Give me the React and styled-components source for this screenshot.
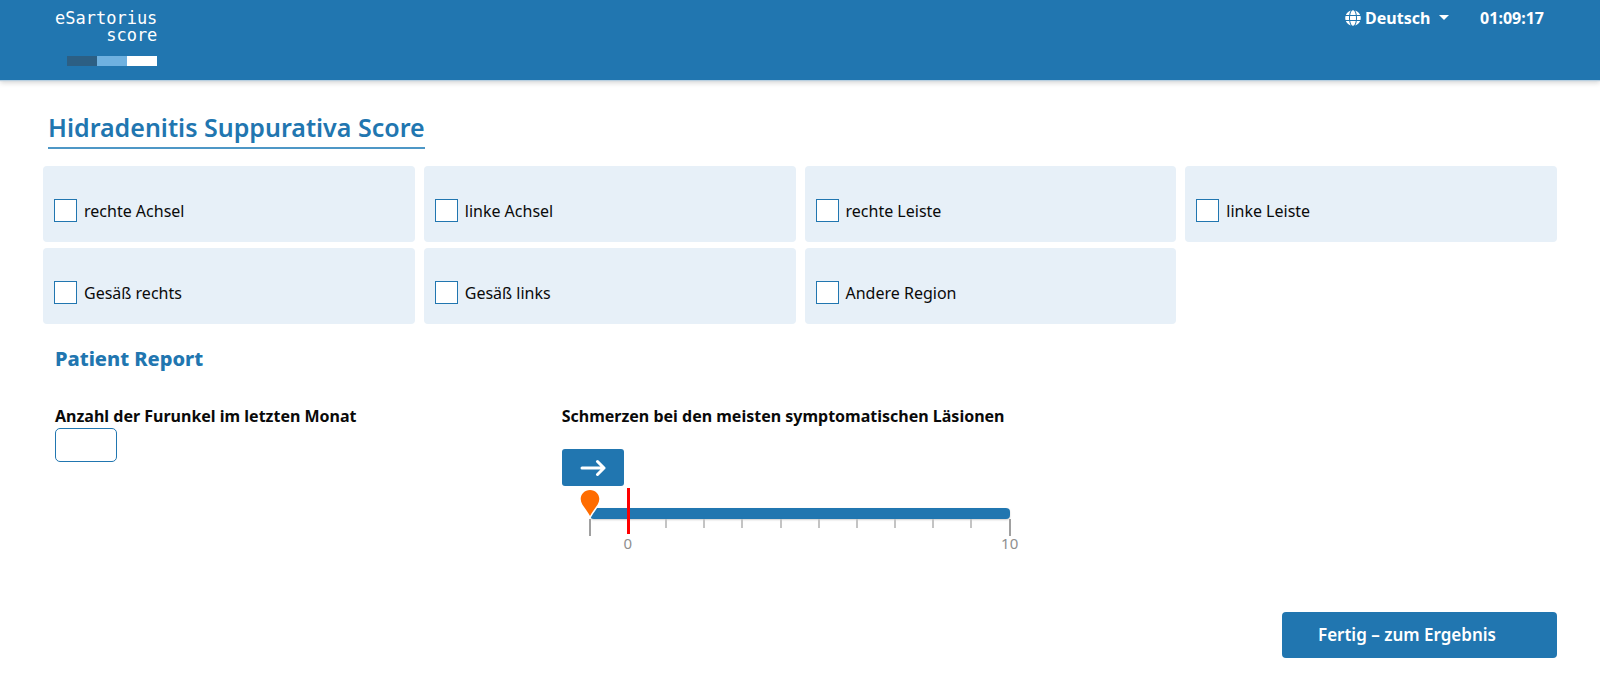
import React, { useState } from "react";
import styled, { createGlobalStyle } from "styled-components";
import { FaGlobe } from "react-icons/fa";

const BLUE = "#2176b0";
const REGIONS = [
  "rechte Achsel",
  "linke Achsel",
  "rechte Leiste",
  "linke Leiste",
  "Gesäß rechts",
  "Gesäß links",
  "Andere Region",
];
const MIN = -1;
const MAX = 10;

const GlobalStyle = createGlobalStyle`
  *, *::before, *::after { box-sizing: border-box; }
  body {
    margin: 0;
    background: #fff;
    color: #0a0a0a;
    font: 400 16px/24px "Noto Sans", sans-serif;
  }
  button, input, select { font: inherit; color: inherit; margin: 0; }
`;

const Header = styled.header`
  display: flex;
  justify-content: space-between;
  align-items: flex-start;
  height: 80px;
  padding: 6px 56px 0 55px;
  background: ${BLUE};
  color: #fff;
  box-shadow: 0 1px 1px #b8cfe0, 0 3px 5px rgba(0, 0, 0, 0.16);
`;

const Logo = styled.a`
  display: flex;
  flex-direction: column;
  align-items: flex-end;
  padding-top: 4px;
  color: #fff;
  text-decoration: none;
  font: 400 17px/17px "DejaVu Sans Mono", monospace;
`;

const LogoBar = styled.span`
  display: flex;
  margin-top: 12px;
`;

const LogoBlock = styled.span`
  width: 30px;
  height: 10px;
  background: ${(p) => p.$color};
`;

const Tools = styled.div`
  display: flex;
  align-items: center;
  gap: 31px;
  font-weight: 700;
`;

const Language = styled.label`
  display: flex;
  align-items: center;
  gap: 4px;
`;

const Caret = styled.span`
  width: 10px;
  margin: 0 0 2px -14px;
  border: 5px solid transparent;
  border-top-color: #fff;
  border-bottom: 0;
  pointer-events: none;
`;

const LanguageSelect = styled.select`
  appearance: none;
  width: 84px;
  height: 24px;
  padding: 0;
  border: 0;
  background: transparent;
  line-height: 24px;
`;

const Main = styled.main`
  padding: 31px 43px 28px;
`;

const Title = styled.h1`
  width: fit-content;
  margin: 0 0 17px 5px;
  padding-bottom: 4px;
  border-bottom: 2px solid #4d97c6;
  color: ${BLUE};
  font-size: 25px;
  font-weight: 600;
  line-height: 32px;
`;

const RegionGrid = styled.div`
  display: grid;
  grid-template-columns: repeat(4, 1fr);
  gap: 6px 9px;
`;

const RegionCard = styled.label`
  display: flex;
  align-items: center;
  gap: 7px;
  height: 76px;
  padding: 12px 11px 0;
  border-radius: 4px;
  background: #e7f0f8;
`;

const RegionName = styled.span`
  padding-top: 2px;
`;

const Checkbox = styled.input`
  appearance: none;
  width: 23px;
  height: 23px;
  border: 1px solid ${BLUE};
  background: #fff;
  &:checked {
    background: ${BLUE};
    box-shadow: inset 0 0 0 4px #fff;
  }
`;

const Report = styled.section`
  padding-left: 12px;
`;

const ReportTitle = styled.h2`
  margin: 21px 0 31px;
  color: ${BLUE};
  font-size: 20px;
  font-weight: 800;
  line-height: 28px;
`;

const ReportGrid = styled.div`
  display: grid;
  grid-template-columns: 1fr 2fr;
  gap: 9px;
`;

const Field = styled.div`
  display: flex;
  flex-direction: column;
  align-items: flex-start;
`;

const FieldLabel = styled.label`
  font-weight: 700;
`;

const NumberInput = styled.input`
  width: 62px;
  height: 34px;
  padding: 0 8px;
  border: 1px solid ${BLUE};
  border-radius: 5px;
  background: #fff;
`;

const StepButton = styled.button`
  display: flex;
  align-items: center;
  justify-content: center;
  width: 62px;
  height: 37px;
  margin-top: 21px;
  padding: 0;
  border: 0;
  border-radius: 3px;
  background: ${BLUE};
  color: #fff;
`;

const Slider = styled.div`
  position: relative;
  width: 100%;
  max-width: 448px;
  padding: 22px 0 0 28px;
`;

const Range = styled.input`
  appearance: none;
  display: block;
  width: 100%;
  height: 11px;
  border-radius: 4px;
  background: ${BLUE};
  box-shadow: 0 1px 2px rgba(0, 0, 0, 0.2);
  &::-webkit-slider-thumb {
    appearance: none;
    width: 1px;
    height: 11px;
  }
`;

const Overlay = styled.div`
  position: absolute;
  inset: 0 0 0 28px;
  pointer-events: none;
`;

const Pin = styled.svg`
  position: absolute;
  top: 2px;
  width: 28px;
  height: 32px;
  transform: translateX(-50%);
`;

const ZeroMark = styled.span`
  position: absolute;
  top: 2px;
  left: calc(100% / 11);
  width: 3px;
  height: 46px;
  margin-left: -1px;
  background: #f00;
`;

const Ticks = styled.div`
  display: flex;
  justify-content: space-between;
  height: 17px;
  margin: 0 -1px;
`;

const Tick = styled.span`
  width: 2px;
  height: ${(p) => (p.$long ? "17px" : "9px")};
  background: ${(p) => (p.$long ? "#a0a0a0" : "#c4c4c4")};
`;

const ScaleNumbers = styled.div`
  display: flex;
  justify-content: space-between;
  margin: 0 -20px 0 calc(100% / 11 - 20px);
  color: #8f8f8f;
  font-size: 15px;
  line-height: 14px;
`;

const ScaleNumber = styled.span`
  width: 40px;
  text-align: center;
`;

const Actions = styled.div`
  display: flex;
  justify-content: flex-end;
  margin-top: 62px;
`;

const SubmitButton = styled.button`
  width: 275px;
  height: 46px;
  padding: 0 36px;
  border: 0;
  border-radius: 4px;
  background: ${BLUE};
  color: #fff;
  font-size: 17px;
  font-weight: 600;
  text-align: left;
`;

export default function App() {
  const [pain, setPain] = useState(MIN);
  const ticks = Array.from({ length: MAX - MIN + 1 }, (_, i) => i + MIN);

  return (
    <>
      <GlobalStyle />
      <Header>
        <Logo href="#">
          <span>eSartorius</span>
          <span>score</span>
          <LogoBar>
            <LogoBlock $color="#2c5f84" />
            <LogoBlock $color="#6fb1e0" />
            <LogoBlock $color="#fff" />
          </LogoBar>
        </Logo>
        <Tools>
          <Language>
            <FaGlobe size={16} aria-hidden="true" />
            <LanguageSelect aria-label="Sprache" defaultValue="de">
              <option value="de">Deutsch</option>
            </LanguageSelect>
            <Caret />
          </Language>
          <time>01:09:17</time>
        </Tools>
      </Header>
      <Main>
        <Title>Hidradenitis Suppurativa Score</Title>
        <RegionGrid>
          {REGIONS.map((name) => (
            <RegionCard key={name}>
              <Checkbox type="checkbox" />
              <RegionName>{name}</RegionName>
            </RegionCard>
          ))}
        </RegionGrid>
        <Report>
          <ReportTitle>Patient Report</ReportTitle>
          <ReportGrid>
            <Field>
              <FieldLabel htmlFor="boils">Anzahl der Furunkel im letzten Monat</FieldLabel>
              <NumberInput id="boils" type="text" inputMode="numeric" />
            </Field>
            <Field>
              <FieldLabel htmlFor="pain">Schmerzen bei den meisten symptomatischen Läsionen</FieldLabel>
              <StepButton
                type="button"
                aria-label="Weiter"
                onClick={() => setPain((v) => Math.min(MAX, v + 1))}
              >
                <svg width="26" height="18" viewBox="0 0 26 18" fill="none" stroke="currentColor" strokeWidth="3" strokeLinecap="round" strokeLinejoin="round">
                  <path d="M2 9H24M17.500 2.500L24 9L17.500 15.500" />
                </svg>
              </StepButton>
              <Slider>
                <Range
                  id="pain"
                  type="range"
                  min={MIN}
                  max={MAX}
                  value={pain}
                  onChange={(e) => setPain(Number(e.target.value))}
                />
                <Ticks>
                  {ticks.map((n) => (
                    <Tick key={n} $long={n === MIN || n === MAX} />
                  ))}
                </Ticks>
                <ScaleNumbers>
                  <ScaleNumber>0</ScaleNumber>
                  <ScaleNumber>10</ScaleNumber>
                </ScaleNumbers>
                <Overlay>
                  <ZeroMark />
                  <Pin viewBox="0 0 28 32" style={{ left: `${((pain - MIN) / (MAX - MIN)) * 100}%` }}>
                    <path d="M0 16H23L13 31H0Z" fill="#fff" />
                    <path d="M14 2C8.700 2 4.700 6 4.700 11C4.700 16.500 10 20.500 14 28C18 20.500 23.300 16.500 23.300 11C23.300 6 19.300 2 14 2Z" fill="#ff6c00" stroke="#fff" strokeWidth="3" paintOrder="stroke" />
                  </Pin>
                </Overlay>
              </Slider>
            </Field>
          </ReportGrid>
        </Report>
        <Actions>
          <SubmitButton type="button">Fertig – zum Ergebnis</SubmitButton>
        </Actions>
      </Main>
    </>
  );
}
